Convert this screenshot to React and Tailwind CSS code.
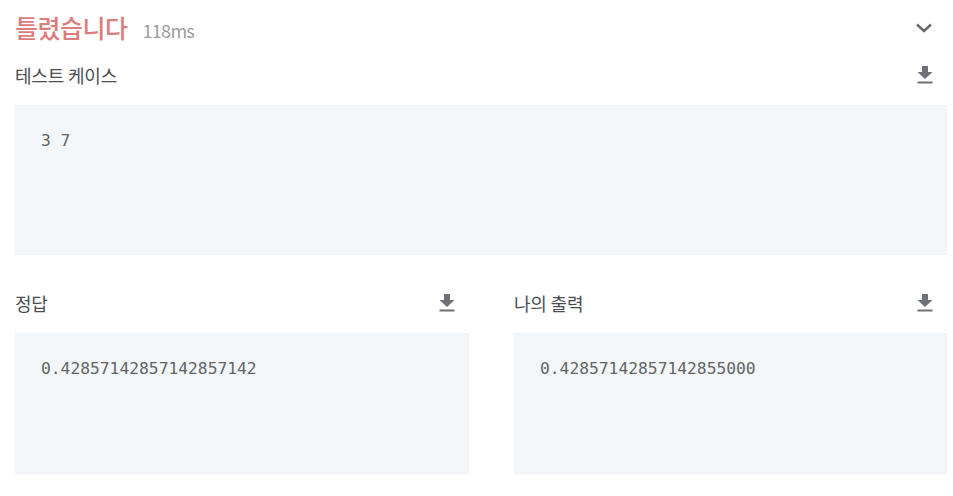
const sans = "font-['Noto_Sans_CJK_KR','Noto_Sans',sans-serif]";
const mono = "font-['DejaVu_Sans_Mono',monospace]";

const ChevronIcon = () => (
  <svg width="18" height="12" viewBox="0 0 18 12" fill="none" stroke="#666b70" strokeWidth="2.4">
    <path d="M2 2.5 L9 9 L16 2.5" />
  </svg>
);

const DownloadIcon = () => (
  <svg width="16" height="18" viewBox="0 0 16 18" fill="#6e7276">
    <path d="M5 0 H11 V6 H15.5 L8 13 L0.5 6 H5 Z" />
    <rect x="0.5" y="15.5" width="15" height="2" />
  </svg>
);

const Header = ({ title, pad }) => (
  <div className={`flex items-center justify-between h-[24px] ${pad}`}>
    <span className={`${sans} text-[18px] font-normal text-[#4a4d50] tracking-[-0.2px]`}>{title}</span>
    <DownloadIcon />
  </div>
);

const OutputBox = ({ value, height }) => (
  <div className={`${mono} ${height} bg-[#f4f7f9] border border-[#f0f3f5] pl-[25px] pt-[24px] text-[16.3px] leading-[22px] text-[#626466] whitespace-pre`}>
    {value}
  </div>
);

export default function App() {
  return (
    <div className="w-[953px] h-[496px] bg-white overflow-hidden pl-[15px] pr-[6px]">
      <div className="flex items-center justify-between h-[56px] mb-[7px] pr-[14px]">
        <div className="flex items-baseline gap-[15px]">
          <span className={`${sans} text-[25px] font-medium text-[#dc7c7c] tracking-[-0.5px]`}>틀렸습니다</span>
          <span className={`${sans} text-[18px] text-[#9a9da0] tracking-[-0.7px]`}>118ms</span>
        </div>
        <ChevronIcon />
      </div>
      <Header title="테스트 케이스" pad="pr-[14px]" />
      <div className="mt-[18px]">
        <OutputBox value="3 7" height="h-[150px]" />
      </div>
      <div className="flex gap-[45px] mt-[36px]">
        <div className="w-[454px]">
          <Header title="정답" pad="pr-[14px]" />
          <div className="mt-[18px]">
            <OutputBox value="0.42857142857142857142" height="h-[141px]" />
          </div>
        </div>
        <div className="w-[433px]">
          <Header title="나의 출력" pad="pr-[14px]" />
          <div className="mt-[18px]">
            <OutputBox value="0.42857142857142855000" height="h-[141px]" />
          </div>
        </div>
      </div>
    </div>
  );
}
